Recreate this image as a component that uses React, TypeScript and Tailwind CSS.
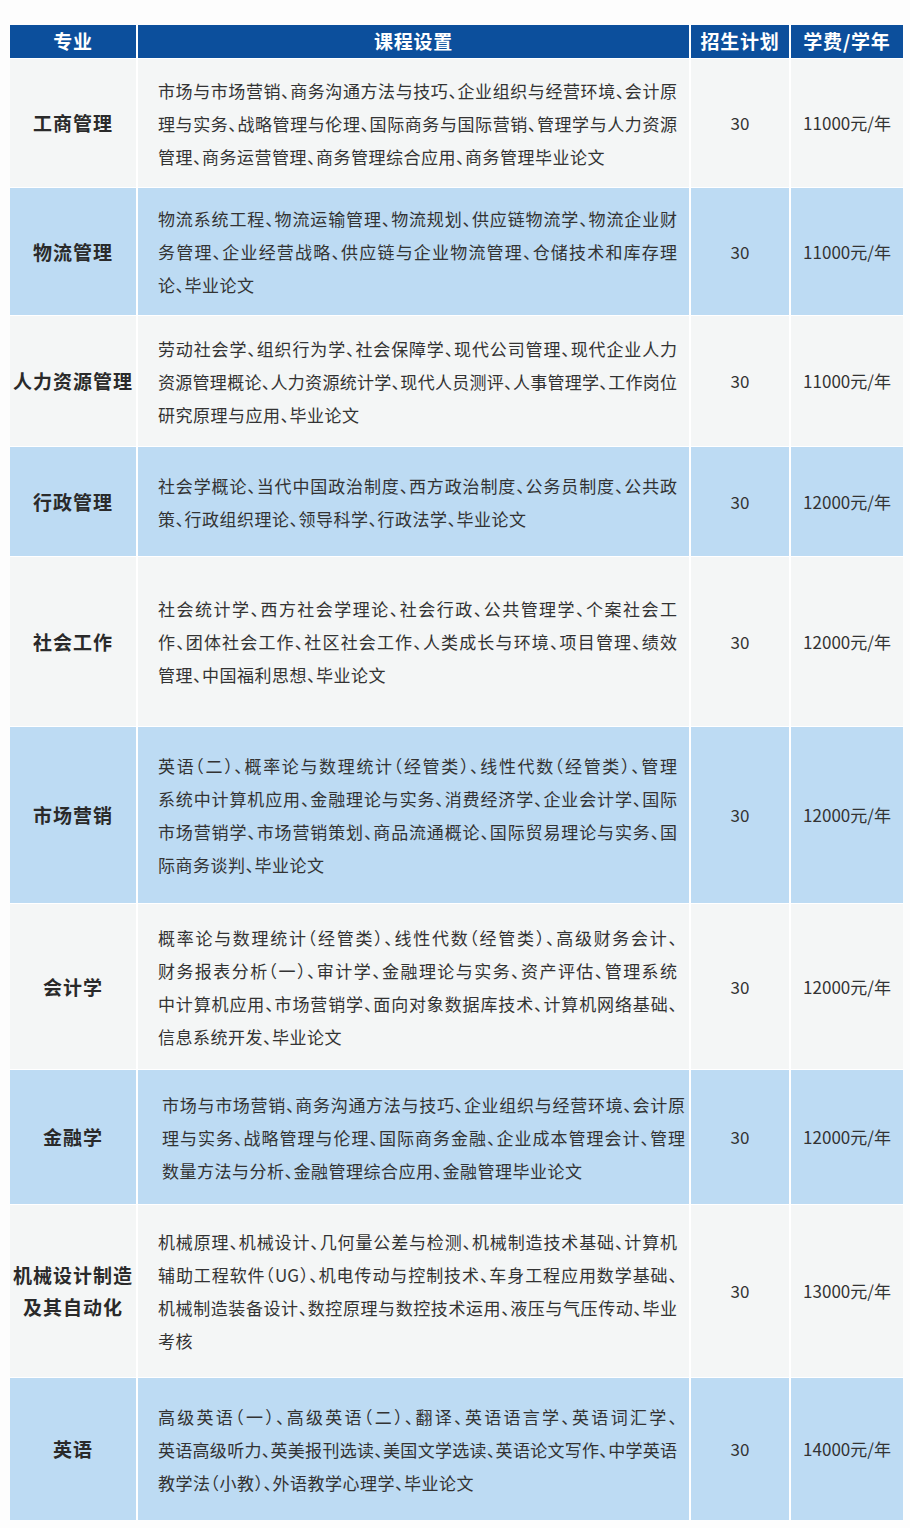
import React from "react";

type Row = { major: string[]; lines: string[]; plan: string; fee: string; h: number; blue: boolean; pl?: number; w?: number };

const rows: Row[] = [
  {
    major: ["工商管理"],
    lines: [
      "市场与市场营销、商务沟通方法与技巧、企业组织与经营环境、会计原",
      "理与实务、战略管理与伦理、国际商务与国际营销、管理学与人力资源",
      "管理、商务运营管理、商务管理综合应用、商务管理毕业论文",
    ],
    plan: "30",
    fee: "11000元/年",
    h: 128,
    blue: false,
  },
  {
    major: ["物流管理"],
    lines: [
      "物流系统工程、物流运输管理、物流规划、供应链物流学、物流企业财",
      "务管理、企业经营战略、供应链与企业物流管理、仓储技术和库存理",
      "论、毕业论文",
    ],
    plan: "30",
    fee: "11000元/年",
    h: 127,
    blue: true,
  },
  {
    major: ["人力资源管理"],
    lines: [
      "劳动社会学、组织行为学、社会保障学、现代公司管理、现代企业人力",
      "资源管理概论、人力资源统计学、现代人员测评、人事管理学、工作岗位",
      "研究原理与应用、毕业论文",
    ],
    plan: "30",
    fee: "11000元/年",
    h: 130,
    blue: false,
  },
  {
    major: ["行政管理"],
    lines: [
      "社会学概论、当代中国政治制度、西方政治制度、公务员制度、公共政",
      "策、行政组织理论、领导科学、行政法学、毕业论文",
    ],
    plan: "30",
    fee: "12000元/年",
    h: 109,
    blue: true,
  },
  {
    major: ["社会工作"],
    lines: [
      "社会统计学、西方社会学理论、社会行政、公共管理学、个案社会工",
      "作、团体社会工作、社区社会工作、人类成长与环境、项目管理、绩效",
      "管理、中国福利思想、毕业论文",
    ],
    plan: "30",
    fee: "12000元/年",
    h: 169,
    blue: false,
  },
  {
    major: ["市场营销"],
    lines: [
      "英语（二）、概率论与数理统计（经管类）、线性代数（经管类）、管理",
      "系统中计算机应用、金融理论与实务、消费经济学、企业会计学、国际",
      "市场营销学、市场营销策划、商品流通概论、国际贸易理论与实务、国",
      "际商务谈判、毕业论文",
    ],
    plan: "30",
    fee: "12000元/年",
    h: 176,
    blue: true,
  },
  {
    major: ["会计学"],
    lines: [
      "概率论与数理统计（经管类）、线性代数（经管类）、高级财务会计、",
      "财务报表分析（一）、审计学、金融理论与实务、资产评估、管理系统",
      "中计算机应用、市场营销学、面向对象数据库技术、计算机网络基础、",
      "信息系统开发、毕业论文",
    ],
    plan: "30",
    fee: "12000元/年",
    h: 165,
    blue: false,
  },
  {
    major: ["金融学"],
    lines: [
      "市场与市场营销、商务沟通方法与技巧、企业组织与经营环境、会计原",
      "理与实务、战略管理与伦理、国际商务金融、企业成本管理会计、管理",
      "数量方法与分析、金融管理综合应用、金融管理毕业论文",
    ],
    plan: "30",
    fee: "12000元/年",
    h: 134,
    blue: true,
    pl: 24,
    w: 523,
  },
  {
    major: ["机械设计制造", "及其自动化"],
    lines: [
      "机械原理、机械设计、几何量公差与检测、机械制造技术基础、计算机",
      "辅助工程软件（UG）、机电传动与控制技术、车身工程应用数学基础、",
      "机械制造装备设计、数控原理与数控技术运用、液压与气压传动、毕业",
      "考核",
    ],
    plan: "30",
    fee: "13000元/年",
    h: 172,
    blue: false,
  },
  {
    major: ["英语"],
    lines: [
      "高级英语（一）、高级英语（二）、翻译、英语语言学、英语词汇学、",
      "英语高级听力、英美报刊选读、美国文学选读、英语论文写作、中学英语",
      "教学法（小教）、外语教学心理学、毕业论文",
    ],
    plan: "30",
    fee: "14000元/年",
    h: 142,
    blue: true,
  },
];

export default function App() {
  return (
    <div className="min-h-[1528px] w-[910px] bg-[#fdfdfd] pt-[25px] font-['Noto_Sans_CJK_SC',sans-serif]">
      <div className="ml-[10px] flex w-[893px] flex-col gap-y-[1px] bg-white">
        <div className="grid h-[33px] grid-cols-[126px_551px_98px_112px] gap-x-[2px] text-[19px] font-bold tracking-[0.8px] text-white">
          <div className="flex items-center justify-center bg-[#0c4f9c]">专业</div>
          <div className="flex items-center justify-center bg-[#0c4f9c]">课程设置</div>
          <div className="flex items-center justify-center bg-[#0c4f9c]">招生计划</div>
          <div className="flex items-center justify-center bg-[#0c4f9c]">学费/学年</div>
        </div>
        {rows.map((r, i) => {
          const bg = r.blue ? "bg-[#bddbf3]" : "bg-[#f4f6f6]";
          return (
            <div
              key={i}
              className="grid grid-cols-[126px_551px_98px_112px] gap-x-[2px]"
              style={{ height: r.h }}
            >
              <div className={`flex flex-col items-center justify-center text-[19px] font-bold leading-[32px] tracking-[1px] text-[#2a2a2a] ${bg}`}>
                {r.major.map((m, j) => (
                  <div key={j}>{m}</div>
                ))}
              </div>
              <div className={`flex flex-col justify-center ${bg}`} style={{ paddingLeft: r.pl ?? 20 }}>
                <div
                  className="text-[17px] leading-[33px] text-[#333333] [font-feature-settings:'halt']"
                  style={{ width: r.w ?? 519 }}
                >
                  {r.lines.map((l, j) => (
                    <div
                      key={j}
                      className={
                        j < r.lines.length - 1
                          ? "whitespace-nowrap text-justify [text-align-last:justify]"
                          : "whitespace-nowrap tracking-[0.5px]"
                      }
                    >
                      {l}
                    </div>
                  ))}
                </div>
              </div>
              <div className={`flex items-center justify-center text-[17px] text-[#333333] ${bg}`}>{r.plan}</div>
              <div className={`flex items-center justify-center text-[17px] text-[#333333] ${bg}`}>{r.fee}</div>
            </div>
          );
        })}
      </div>
    </div>
  );
}
